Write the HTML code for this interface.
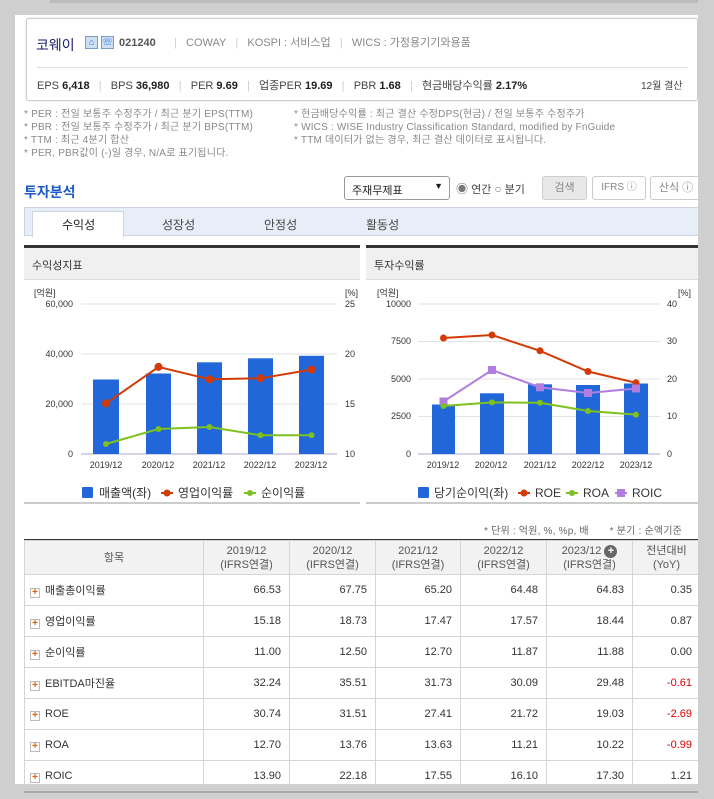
<!DOCTYPE html>
<html><head><meta charset="utf-8"><style>
*{margin:0;padding:0;box-sizing:border-box}
body{width:714px;height:799px;background:#cfcfcf;position:relative;overflow:hidden;font-family:"Liberation Sans","Noto Sans CJK KR",sans-serif;font-size:11px;color:#333}
.a{position:absolute;white-space:nowrap}
#main{position:absolute;left:15px;top:15px;width:683px;height:769px;background:#fff}
.card{position:absolute;left:26px;top:18px;width:672px;height:83px;border:1px solid #ccc;border-radius:3px;background:#fff;box-shadow:0 0 2px #ddd}
.note{color:#888;font-size:10px;letter-spacing:0.2px}
.sep{color:#ccc}
b{color:#222}
.ph{position:absolute;height:35px;background:#f0f0f0;border-top:3px solid #333;border-bottom:1px solid #ddd;font-size:11px;padding:9px 0 0 8px}
table{position:absolute;left:24px;top:540px;border-collapse:collapse;font-size:11px}
td,th{border:1px solid #d5d5d5;height:31px}
th{background:#f2f2f2;font-weight:normal;color:#555;height:34px;line-height:14px}
td{text-align:right;padding-right:8px;color:#333}
td.l{text-align:left;padding-left:5px}
.pl{display:inline-block;width:10px;height:10px;border:1px solid #bbb;background:#fff;color:#e55b00;font-size:10px;line-height:8px;text-align:center;font-weight:bold;margin-right:5px;vertical-align:-1px}
.neg{color:#d00}
.ic{position:absolute;top:36px;width:13px;height:13px;border:1px solid #7a9cc8;background:#cfe0f5;color:#1f6fd1;font-size:9px;text-align:center;line-height:11px;font-weight:bold}
</style></head><body>
<div class="a" style="left:50px;top:0;width:650px;height:3px;background:#bbb"></div>
<div id="main"></div>
<div class="card"></div>
<div class="a" style="left:36px;top:35px;font-size:14px;color:#1a1a6e">코웨이</div>
<div class="ic" style="left:85px">⌂</div>
<div class="ic" style="left:101px">☏</div>
<div class="a" style="left:119px;top:37px;font-weight:bold;color:#555">021240</div>
<div class="a" style="left:174px;top:34px;color:#888"><span class="sep">|</span>&nbsp;&nbsp; COWAY &nbsp;&nbsp;<span class="sep">|</span>&nbsp;&nbsp; KOSPI : 서비스업 &nbsp;&nbsp;<span class="sep">|</span>&nbsp;&nbsp; WICS : 가정용기기와용품</div>
<div class="a" style="left:37px;top:67px;width:651px;height:1px;background:#ddd"></div>
<div class="a" style="left:37px;top:77px;color:#444">EPS <b>6,418</b> &nbsp;&nbsp;<span class="sep">|</span>&nbsp;&nbsp; BPS <b>36,980</b> &nbsp;&nbsp;<span class="sep">|</span>&nbsp;&nbsp; PER <b>9.69</b> &nbsp;&nbsp;<span class="sep">|</span>&nbsp;&nbsp; 업종PER <b>19.69</b> &nbsp;&nbsp;<span class="sep">|</span>&nbsp;&nbsp; PBR <b>1.68</b> &nbsp;&nbsp;<span class="sep">|</span>&nbsp;&nbsp; 현금배당수익률 <b>2.17%</b></div>
<div class="a" style="left:641px;top:77px;font-size:10px;color:#444">12월 결산</div>
<div class="a note" style="left:24px;top:108px;line-height:13px">* PER : 전일 보통주 수정주가 / 최근 분기 EPS(TTM)<br>* PBR : 전일 보통주 수정주가 / 최근 분기 BPS(TTM)<br>* TTM : 최근 4분기 합산<br>* PER, PBR값이 (-)일 경우, N/A로 표기됩니다.</div>
<div class="a note" style="left:294px;top:108px;line-height:13px">* 현금배당수익률 : 최근 결산 수정DPS(현금) / 전일 보통주 수정주가<br>* WICS : WISE Industry Classification Standard, modified by FnGuide<br>* TTM 데이터가 없는 경우, 최근 결산 데이터로 표시됩니다.</div>
<div class="a" style="left:24px;top:182px;font-size:14px;font-weight:bold;color:#1e5bc6">투자분석</div>
<div class="a" style="left:344px;top:176px;width:106px;height:24px;border:1px solid #999;border-radius:3px;padding:5px 0 0 7px;color:#222">주재무제표<span style="position:absolute;right:6px;top:4px;font-size:9px">▼</span></div>
<div class="a" style="left:456px;top:180px;color:#444"><span style="font-size:12px;color:#777">◉</span> 연간 <span style="font-size:12px;color:#777">○</span> 분기</div>
<div class="a" style="left:542px;top:176px;width:45px;height:24px;border:1px solid #ccc;border-radius:3px;background:#e8e8e8;color:#888;text-align:center;line-height:22px">검색</div>
<div class="a" style="left:592px;top:176px;width:54px;height:24px;border:1px solid #ccc;border-radius:3px;color:#888;text-align:center;line-height:22px;font-size:10px">IFRS ⓘ</div>
<div class="a" style="left:650px;top:176px;width:52px;height:24px;border:1px solid #ccc;border-radius:3px;color:#888;text-align:center;line-height:22px">산식 ⓘ</div>
<div class="a" style="left:24px;top:207px;width:676px;height:29px;background:#e8eef8;border:1px solid #ccd4e2"></div>
<div class="a" style="left:32px;top:211px;width:92px;height:26px;background:#fff;border:1px solid #ccd4e2;border-bottom:none"></div>
<div class="a" style="left:62px;top:216px;font-size:12px;color:#222">수익성</div>
<div class="a" style="left:162px;top:216px;font-size:12px;color:#444">성장성</div>
<div class="a" style="left:264px;top:216px;font-size:12px;color:#444">안정성</div>
<div class="a" style="left:366px;top:216px;font-size:12px;color:#444">활동성</div>
<div class="ph" style="left:24px;top:245px;width:336px">수익성지표</div>
<div class="ph" style="left:366px;top:245px;width:334px">투자수익률</div>
<div class="a" style="left:24px;top:502px;width:336px;height:2px;background:#ccc"></div>
<div class="a" style="left:366px;top:502px;width:334px;height:2px;background:#ccc"></div>
<svg class="a" style="left:0;top:0" width="714" height="520" font-family="Liberation Sans, Noto Sans CJK KR, sans-serif" font-size="9" fill="#333">
<g stroke="#e3e3e3"><line x1="81" y1="304" x2="337" y2="304"/><line x1="81" y1="354" x2="337" y2="354"/><line x1="81" y1="404" x2="337" y2="404"/>
<line x1="418" y1="304" x2="660" y2="304"/><line x1="418" y1="341.5" x2="660" y2="341.5"/><line x1="418" y1="379" x2="660" y2="379"/><line x1="418" y1="416.5" x2="660" y2="416.5"/></g>
<g stroke="#aac" ><line x1="81" y1="454" x2="337" y2="454"/><line x1="418" y1="454" x2="660" y2="454"/></g>
<text x="34" y="296">[억원]</text><text x="345" y="296">[%]</text>
<g text-anchor="end"><text x="73" y="307">60,000</text><text x="73" y="357">40,000</text><text x="73" y="407">20,000</text><text x="73" y="457">0</text></g>
<text x="345" y="307">25</text><text x="345" y="357">20</text><text x="345" y="407">15</text><text x="345" y="457">10</text>
<g fill="#2167d9"><rect x="93" y="379.5" width="26" height="74.5"/><rect x="146" y="373.5" width="25" height="80.5"/><rect x="197" y="362.3" width="25" height="91.7"/><rect x="248" y="358.3" width="25" height="95.7"/><rect x="299" y="355.8" width="25" height="98.2"/></g>
<polyline fill="none" stroke="#d23a06" stroke-width="2" points="106,403.4 158.5,366.9 209.5,379.3 260.5,378.3 311.5,369.6"/>
<g fill="#d23a06"><circle cx="106" cy="403.4" r="4"/><circle cx="158.5" cy="366.9" r="4"/><circle cx="209.5" cy="379.3" r="4"/><circle cx="260.5" cy="378.3" r="4"/><circle cx="311.5" cy="369.6" r="4"/></g>
<polyline fill="none" stroke="#7dc11e" stroke-width="2" points="106,444 158.5,429 209.5,427 260.5,435.3 311.5,435.2"/>
<g fill="#7dc11e"><circle cx="106" cy="444" r="3"/><circle cx="158.5" cy="429" r="3"/><circle cx="209.5" cy="427" r="3"/><circle cx="260.5" cy="435.3" r="3"/><circle cx="311.5" cy="435.2" r="3"/></g>
<g text-anchor="middle"><text x="106" y="468">2019/12</text><text x="158" y="468">2020/12</text><text x="209" y="468">2021/12</text><text x="260" y="468">2022/12</text><text x="311" y="468">2023/12</text>
<text x="443" y="468">2019/12</text><text x="491" y="468">2020/12</text><text x="540" y="468">2021/12</text><text x="588" y="468">2022/12</text><text x="636" y="468">2023/12</text></g>
<text x="377" y="296">[억원]</text><text x="678" y="296">[%]</text>
<g text-anchor="end"><text x="411" y="307">10000</text><text x="411" y="344">7500</text><text x="411" y="382">5000</text><text x="411" y="419">2500</text><text x="411" y="457">0</text></g>
<text x="667" y="307">40</text><text x="667" y="344">30</text><text x="667" y="382">20</text><text x="667" y="419">10</text><text x="667" y="457">0</text>
<g fill="#2167d9"><rect x="432" y="404.5" width="23" height="49.5"/><rect x="480" y="393.3" width="24" height="60.7"/><rect x="528" y="384.3" width="24" height="69.7"/><rect x="576" y="385" width="24" height="69"/><rect x="624" y="383.5" width="24" height="70.5"/></g>
<polyline fill="none" stroke="#d23a06" stroke-width="2" points="443.5,338 492,335 540,350.8 588,371.5 636,382.8"/>
<g fill="#d23a06"><circle cx="443.5" cy="338" r="3.5"/><circle cx="492" cy="335" r="3.5"/><circle cx="540" cy="350.8" r="3.5"/><circle cx="588" cy="371.5" r="3.5"/><circle cx="636" cy="382.8" r="3.5"/></g>
<polyline fill="none" stroke="#b07ee0" stroke-width="2" points="443.5,401.5 492,370 540,387.3 588,393 636,388.5"/>
<g fill="#b07ee0"><rect x="439.5" y="397.5" width="8" height="8"/><rect x="488" y="366" width="8" height="8"/><rect x="536" y="383.3" width="8" height="8"/><rect x="584" y="389" width="8" height="8"/><rect x="632" y="384.5" width="8" height="8"/></g>
<polyline fill="none" stroke="#7dc11e" stroke-width="2" points="443.5,406 492,402.4 540,402.8 588,411 636,414.6"/>
<g fill="#7dc11e"><circle cx="443.5" cy="406" r="3"/><circle cx="492" cy="402.4" r="3"/><circle cx="540" cy="402.8" r="3"/><circle cx="588" cy="411" r="3"/><circle cx="636" cy="414.6" r="3"/></g>
<g font-size="12">
<rect x="82" y="487" width="11" height="11" fill="#2167d9" rx="1"/><text x="99" y="497">매출액(좌)</text>
<line x1="161" y1="493" x2="173" y2="493" stroke="#d23a06" stroke-width="2"/><circle cx="167" cy="493" r="3.5" fill="#d23a06"/><text x="178" y="497">영업이익률</text>
<line x1="244" y1="493" x2="256" y2="493" stroke="#7dc11e" stroke-width="2"/><circle cx="250" cy="493" r="3" fill="#7dc11e"/><text x="261" y="497">순이익률</text>
<rect x="418" y="487" width="11" height="11" fill="#2167d9" rx="1"/><text x="434" y="497">당기순이익(좌)</text>
<line x1="518" y1="493" x2="530" y2="493" stroke="#d23a06" stroke-width="2"/><circle cx="524" cy="493" r="3.5" fill="#d23a06"/><text x="535" y="497">ROE</text>
<line x1="566" y1="493" x2="578" y2="493" stroke="#7dc11e" stroke-width="2"/><circle cx="572" cy="493" r="3" fill="#7dc11e"/><text x="583" y="497">ROA</text>
<line x1="615" y1="493" x2="627" y2="493" stroke="#b07ee0" stroke-width="2"/><rect x="617" y="489" width="8" height="8" fill="#b07ee0"/><text x="632" y="497">ROIC</text></g>
</svg>
<div class="a note" style="left:484px;top:522px;color:#666">* 단위 : 억원, %, %p, 배 &nbsp;&nbsp;&nbsp;&nbsp;&nbsp; * 분기 : 순액기준</div>
<div class="a" style="left:24px;top:539px;width:676px;height:2px;background:#333"></div>
<table>
<colgroup><col style="width:179px"><col style="width:86px"><col style="width:86px"><col style="width:85px"><col style="width:86px"><col style="width:86px"><col style="width:68px"></colgroup>
<tr><th>항목</th><th>2019/12<br>(IFRS연결)</th><th>2020/12<br>(IFRS연결)</th><th>2021/12<br>(IFRS연결)</th><th>2022/12<br>(IFRS연결)</th><th>2023/12 <span style="display:inline-block;width:13px;height:13px;border-radius:50%;background:#666;color:#fff;font-weight:bold;line-height:13px">+</span><br>(IFRS연결)</th><th>전년대비<br>(YoY)</th></tr>
<tr><td class="l"><span class="pl">+</span>매출총이익률</td><td>66.53</td><td>67.75</td><td>65.20</td><td>64.48</td><td>64.83</td><td>0.35</td></tr>
<tr><td class="l"><span class="pl">+</span>영업이익률</td><td>15.18</td><td>18.73</td><td>17.47</td><td>17.57</td><td>18.44</td><td>0.87</td></tr>
<tr><td class="l"><span class="pl">+</span>순이익률</td><td>11.00</td><td>12.50</td><td>12.70</td><td>11.87</td><td>11.88</td><td>0.00</td></tr>
<tr><td class="l"><span class="pl">+</span>EBITDA마진율</td><td>32.24</td><td>35.51</td><td>31.73</td><td>30.09</td><td>29.48</td><td class="neg">-0.61</td></tr>
<tr><td class="l"><span class="pl">+</span>ROE</td><td>30.74</td><td>31.51</td><td>27.41</td><td>21.72</td><td>19.03</td><td class="neg">-2.69</td></tr>
<tr><td class="l"><span class="pl">+</span>ROA</td><td>12.70</td><td>13.76</td><td>13.63</td><td>11.21</td><td>10.22</td><td class="neg">-0.99</td></tr>
<tr><td class="l"><span class="pl">+</span>ROIC</td><td>13.90</td><td>22.18</td><td>17.55</td><td>16.10</td><td>17.30</td><td>1.21</td></tr>
</table>
<div class="a" style="left:0;top:784px;width:714px;height:15px;background:#cfcfcf"></div>
<div class="a" style="left:24px;top:791px;width:676px;height:2px;background:#aaa"></div>
<div class="a" style="left:698px;top:0;width:16px;height:799px;background:#cfcfcf"></div>
</body></html>
